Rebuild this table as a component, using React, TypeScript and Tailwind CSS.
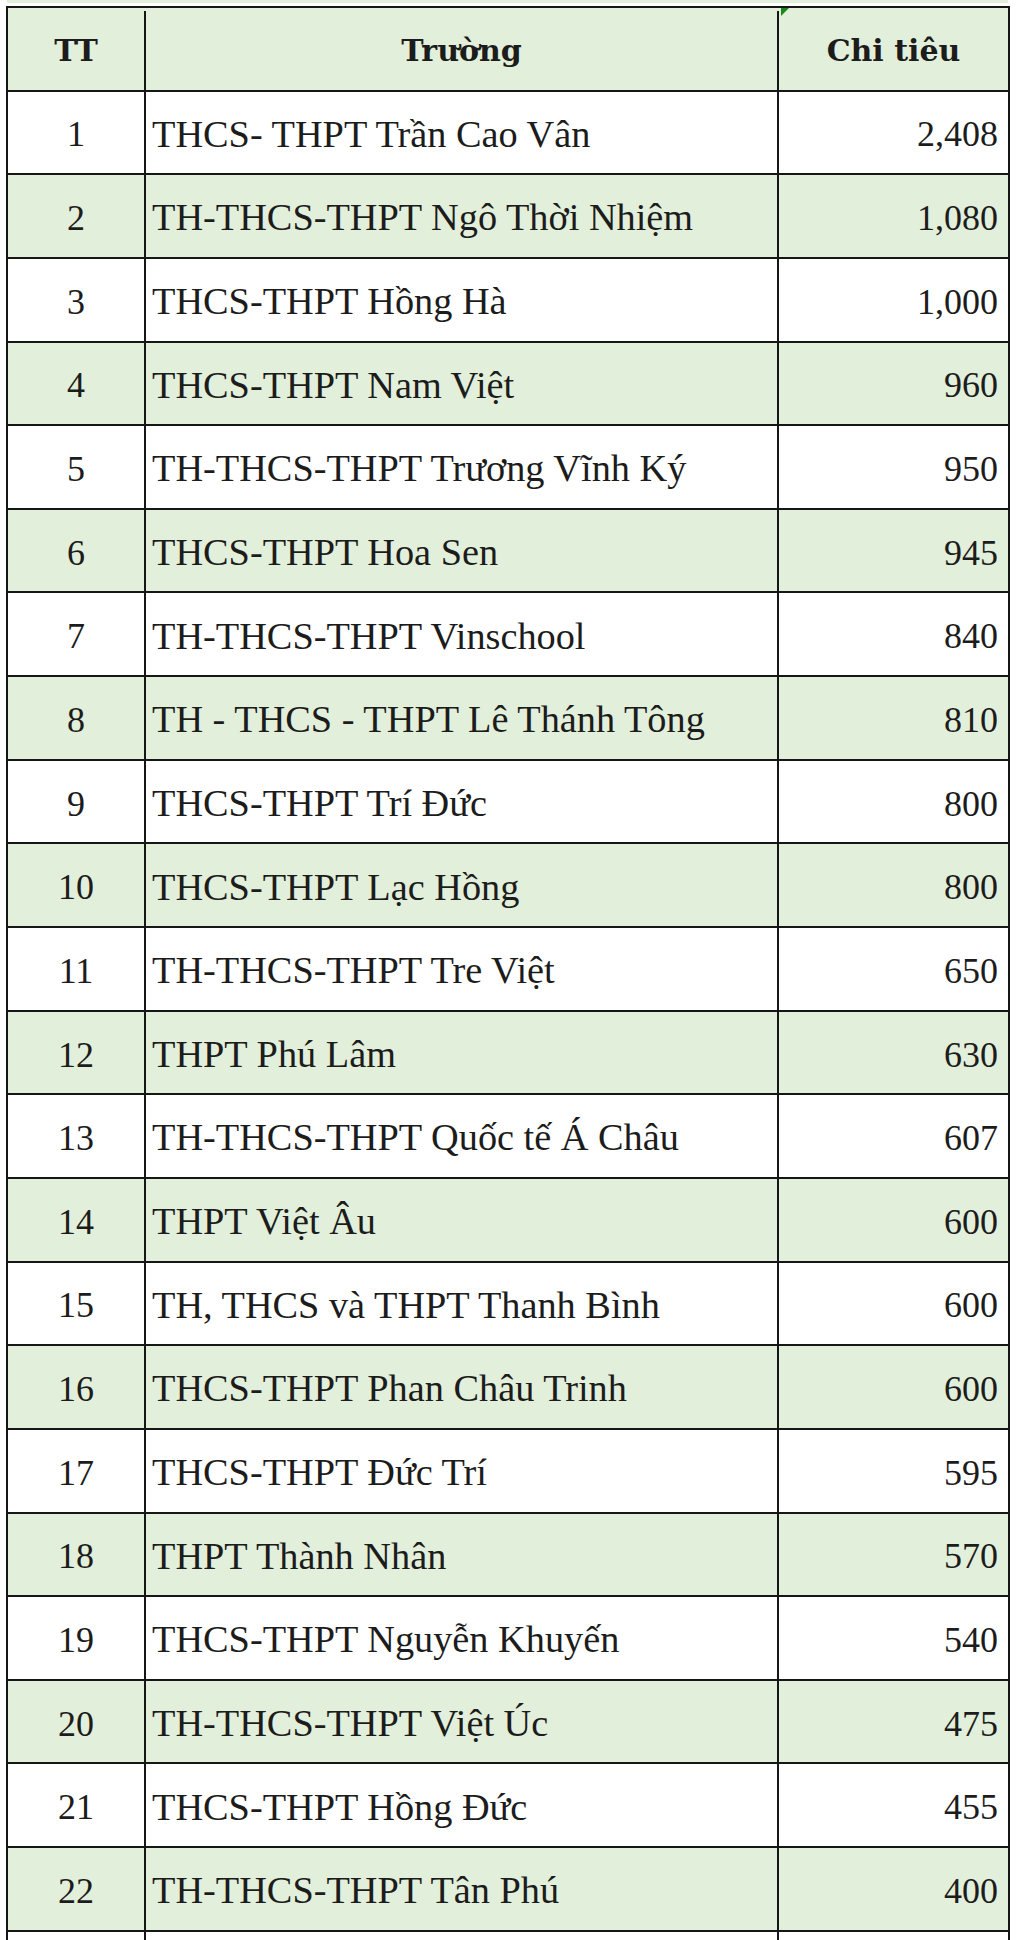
const rows: [string, string][] = [
  ["THCS- THPT Trần Cao Vân", "2,408"],
  ["TH-THCS-THPT Ngô Thời Nhiệm", "1,080"],
  ["THCS-THPT Hồng Hà", "1,000"],
  ["THCS-THPT Nam Việt", "960"],
  ["TH-THCS-THPT Trương Vĩnh Ký", "950"],
  ["THCS-THPT Hoa Sen", "945"],
  ["TH-THCS-THPT Vinschool", "840"],
  ["TH - THCS - THPT Lê Thánh Tông", "810"],
  ["THCS-THPT Trí Đức", "800"],
  ["THCS-THPT Lạc Hồng", "800"],
  ["TH-THCS-THPT Tre Việt", "650"],
  ["THPT Phú Lâm", "630"],
  ["TH-THCS-THPT Quốc tế Á Châu", "607"],
  ["THPT Việt Âu", "600"],
  ["TH, THCS và THPT Thanh Bình", "600"],
  ["THCS-THPT Phan Châu Trinh", "600"],
  ["THCS-THPT Đức Trí", "595"],
  ["THPT Thành Nhân", "570"],
  ["THCS-THPT Nguyễn Khuyến", "540"],
  ["TH-THCS-THPT Việt Úc", "475"],
  ["THCS-THPT Hồng Đức", "455"],
  ["TH-THCS-THPT Tân Phú", "400"],
];

const serif = "font-['Liberation_Serif','Times_New_Roman',serif]";

function Row({ tt, name, value, green }: { tt: string; name: string; value: string; green: boolean }) {
  return (
    <div className={`flex h-[83.65px] border-b-2 border-[#161616] ${green ? "bg-[#e2efda]" : "bg-white"}`}>
      <div className="flex w-[138px] shrink-0 items-center justify-center border-r-2 border-[#161616] pt-1 text-[36px]">
        {tt}
      </div>
      <div className="flex w-[633px] shrink-0 items-center whitespace-nowrap border-r-2 border-[#161616] pl-[6px] pt-1 text-[38.3px]">
        {name}
      </div>
      <div className="flex flex-1 items-center justify-end pr-[10px] pt-1 text-[36px]">{value}</div>
    </div>
  );
}

export default function App() {
  return (
    <div className={`h-[1940px] w-[1020px] overflow-hidden bg-white text-[#1c1c1c] ${serif}`}>
      <div className="ml-[7px] mr-[12px] h-[3px] bg-[#e2efda]" />
      <div className="relative ml-[6px] mt-[3px] w-[1004px] border-x-2 border-t-2 border-[#161616]">
        {/* header */}
        <div className="flex h-[83.65px] border-b-2 border-[#161616] bg-[#e2efda] pt-[3px] font-['DejaVu_Serif',serif] text-[30px] font-bold">
          <div className="flex w-[138px] shrink-0 items-center justify-center border-r-2 border-[#161616]">TT</div>
          <div className="flex w-[633px] shrink-0 items-center justify-center border-r-2 border-[#161616]">Trường</div>
          <div className="flex flex-1 items-center justify-center">Chi tiêu</div>
        </div>
        <div className="absolute left-[773px] top-0 h-0 w-0 border-r-[8px] border-t-[8px] border-r-transparent border-t-[#1a8a1a]" />
        {rows.map(([name, value], i) => (
          <Row key={i} tt={String(i + 1)} name={name} value={value} green={i % 2 === 1} />
        ))}
        <Row tt="" name="" value="" green={false} />
      </div>
    </div>
  );
}
